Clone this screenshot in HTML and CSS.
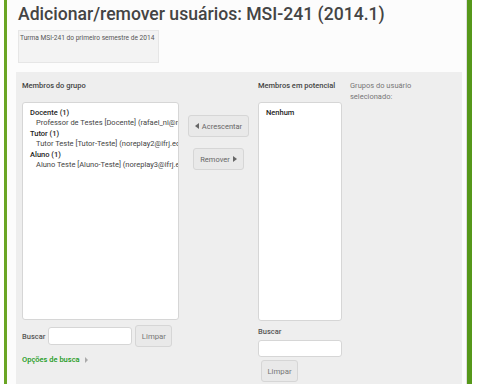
FILE: index.html
```html
<!DOCTYPE html>
<html lang="pt-BR">
<head>
    <meta charset="UTF-8">
    <meta name="viewport" content="width=device-width, initial-scale=1.0">
    <title>Adicionar/remover usuários</title>
    <link rel="stylesheet" href="styles.css">
</head>
<body>
    <div class="page">
        <div class="main">
            <h2 class="title">Adicionar/remover usuários: MSI-241 (2014.1)</h2>
            <div class="description">Turma MSI-241 do primeiro semestre de 2014</div>

            <div class="panel">
                <div class="col col-members">
                    <label class="col-label">Membros do grupo</label>
                    <div class="listbox listbox-members">
                        <div class="group">Docente (1)</div>
                        <div class="option">Professor de Testes [Docente] (rafael_ni@m</div>
                        <div class="group">Tutor (1)</div>
                        <div class="option">Tutor Teste [Tutor-Teste] (noreplay2@ifrj.ec</div>
                        <div class="group">Aluno (1)</div>
                        <div class="option">Aluno Teste [Aluno-Teste] (noreplay3@ifrj.e</div>
                    </div>
                    <div class="search-row">
                        <label class="search-label">Buscar</label>
                        <input class="search-input" type="text">
                        <button class="btn btn-clear">Limpar</button>
                    </div>
                    <a class="search-options" href="#">Opções de busca</a>
                </div>

                <div class="col col-buttons">
                    <button class="btn btn-add">Acrescentar</button>
                    <button class="btn btn-remove">Remover</button>
                </div>

                <div class="col col-potential">
                    <label class="col-label">Membros em potencial</label>
                    <div class="listbox listbox-potential">
                        <div class="group">Nenhum</div>
                    </div>
                    <label class="search-label search-label-block">Buscar</label>
                    <input class="search-input search-input-block" type="text">
                    <button class="btn btn-clear btn-clear-block">Limpar</button>
                </div>

                <div class="col col-groups">
                    <div class="groups-label">Grupos do usuário selecionado:</div>
                </div>
            </div>
        </div>
    </div>
</body>
</html>
```

FILE: styles.css
```css
html, body {
    margin: 0;
    height: 100%;
    overflow: hidden;
}

body {
    font-family: 'Roboto', 'Liberation Sans', sans-serif;
    background-color: #fff;
    color: #333;
}

.page {
    margin-left: 4px;
    width: 459px;
    height: 100%;
    border-left: 3px solid #6aa524;
    border-right: 1px solid #dedede;
    box-shadow: 5px 0 0 #56981a;
    background-color: #fcfcfc;
}

.main {
    padding: 4px 0 0 9px;
}

.title {
    margin: 0 0 6px 2px;
    font-size: 17.6px;
    font-weight: 500;
    color: #444;
    line-height: 20px;
}

.description {
    margin-left: 2px;
    width: 137px;
    height: 28px;
    padding: 3px 1px 0;
    background-color: #f3f3f3;
    border: 1px solid #e6e6e6;
    font-size: 6.6px;
    color: #555;
}

.panel {
    margin-top: 9px;
    width: 440px;
    height: 320px;
    padding: 9px 0 0 6px;
    background-color: #eeeeee;
    display: flex;
}

.col {
    display: flex;
    flex-direction: column;
}

.col-label {
    font-size: 7.5px;
    font-weight: 500;
    color: #444;
    height: 21px;
    line-height: 10px;
}

.col-members {
    width: 157px;
}

.listbox {
    background-color: #fff;
    border: 1px solid #d6d6d6;
    border-radius: 3px;
    box-sizing: border-box;
    overflow: hidden;
    padding: 5px 0 0 7px;
    font-size: 7.5px;
    line-height: 10.4px;
}

.listbox-members {
    width: 157px;
    height: 218px;
}

.group {
    font-weight: 500;
    color: #222;
}

.option {
    padding-left: 6px;
    color: #444;
    white-space: nowrap;
    overflow: hidden;
}

.search-row {
    display: flex;
    align-items: center;
    margin-top: 5px;
    gap: 3px;
}

.search-label {
    font-size: 7.5px;
    font-weight: 500;
    color: #555;
}

.search-input {
    width: 84px;
    height: 18px;
    box-sizing: border-box;
    border: 1px solid #d6d6d6;
    border-radius: 3px;
    background-color: #fff;
    padding: 0;
}

.btn {
    font-family: inherit;
    font-size: 7.5px;
    color: #666;
    background-color: #e9e9e9;
    border: 1px solid #d6d6d6;
    border-radius: 3px;
    padding: 0;
    box-sizing: border-box;
    display: flex;
    align-items: center;
    justify-content: center;
    gap: 3px;
}

/* small triangles drawn with borders */
.btn-add::before,
.btn-remove::after {
    content: "";
    width: 0;
    height: 0;
    border-top: 3px solid transparent;
    border-bottom: 3px solid transparent;
}

.btn-add::before {
    border-right: 4px solid #666;
}

.btn-remove::after {
    border-left: 4px solid #666;
}

.btn-clear {
    width: 37px;
    height: 22px;
    font-size: 7.8px;
    color: #777;
}

.search-options {
    margin-top: 8px;
    font-size: 7.5px;
    font-weight: 500;
    color: #1a9a1a;
    text-decoration: none;
    display: flex;
    align-items: center;
    gap: 5px;
}

.search-options::after {
    content: "";
    width: 0;
    height: 0;
    border-top: 3px solid transparent;
    border-bottom: 3px solid transparent;
    border-left: 3px solid #aaa;
}

.col-buttons {
    width: 79px;
    align-items: center;
    padding-top: 34px;
    box-sizing: border-box;
}

.btn-add {
    width: 61px;
    height: 22px;
}

.btn-remove {
    width: 51px;
    height: 22px;
    margin-top: 11px;
}

.col-potential {
    width: 84px;
}

.listbox-potential {
    width: 84px;
    height: 219px;
}

.search-label-block {
    margin-top: 6px;
    line-height: 10px;
}

.search-input-block {
    margin-top: 3px;
    height: 17px;
}

.btn-clear-block {
    margin: 3px 0 0 3px;
}

.col-groups {
    margin-left: 8px;
    width: 84px;
}

.groups-label {
    margin-top: -1px;
    font-size: 7.5px;
    line-height: 11px;
    color: #777;
}
```
